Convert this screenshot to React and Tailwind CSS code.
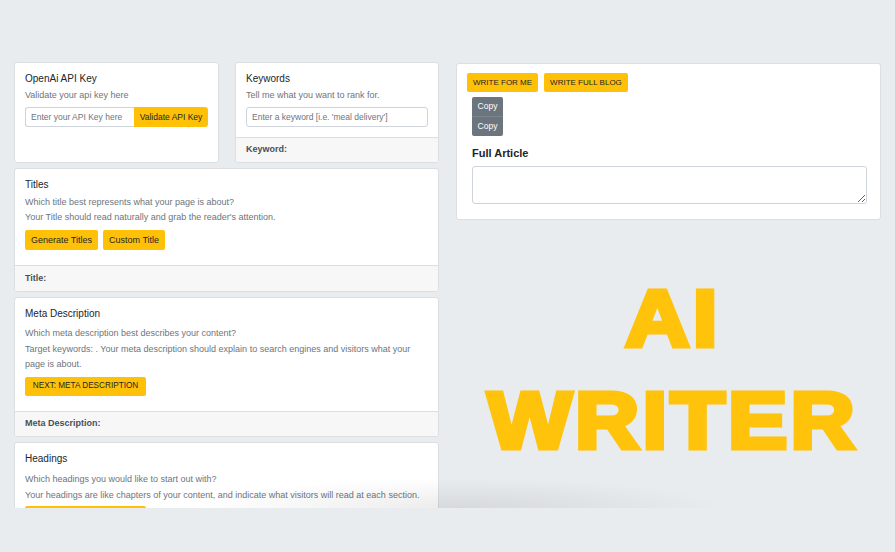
import React from "react";

function Card({ className = "", children }) {
  return (
    <div className={"shrink-0 bg-white border border-[#dcdfe2] rounded-[3px] flex flex-col " + className}>
      {children}
    </div>
  );
}

function Footer({ children, h = "h-[26px]" }) {
  return (
    <div className={"shrink-0 mt-auto border-t border-[#dcdfe2] bg-[#f7f7f7] px-[10px] flex items-center text-[9px] font-bold text-[#495057] rounded-b-[3px] " + h}>
      {children}
    </div>
  );
}

function YBtn({ children, className = "h-[20px] text-[9px] px-[6px]" }) {
  return (
    <button className={"bg-[#ffc107] text-[#212529] rounded-[2px] leading-none whitespace-nowrap " + className}>
      {children}
    </button>
  );
}

export default function App() {
  return (
    <div className="relative w-[895px] h-[552px] overflow-hidden bg-[#e9ecef] font-['Liberation_Sans',Arial,sans-serif]">
      <div className="h-[508px] overflow-hidden pt-[62px] px-[14px] flex gap-[17px]">
        {/* Left column */}
        <div className="w-[425px] shrink-0 flex flex-col gap-[5px]">
          <div className="shrink-0 grid grid-cols-[205px_204px] gap-[16px] h-[101px]">
            <Card>
              <div className="pt-[9px] px-[10px]">
                <div className="text-[10px] leading-[13px] text-[#212529]">OpenAi API Key</div>
                <div className="mt-[3px] text-[9px] leading-[15px] text-[#6c757d]">Validate your api key here</div>
                <div className="mt-[4px] flex h-[20px]">
                  <input
                    className="w-[109px] h-[20px] border border-[#ced4da] border-r-0 rounded-l-[3px] px-[5px] text-[8.5px] text-[#495057] placeholder:text-[#6c757d] outline-none"
                    placeholder="Enter your API Key here"
                  />
                  <button className="w-[76px] h-[20px] bg-[#ffc107] text-[#212529] text-[8.5px] rounded-r-[3px] leading-none whitespace-nowrap">
                    Validate API Key
                  </button>
                </div>
              </div>
            </Card>
            <Card>
              <div className="pt-[9px] px-[10px] pb-[10px]">
                <div className="text-[10px] leading-[13px] text-[#212529]">Keywords</div>
                <div className="mt-[3px] text-[9px] leading-[15px] text-[#6c757d]">Tell me what you want to rank for.</div>
                <input
                  className="mt-[4px] w-full h-[20px] border border-[#ced4da] rounded-[3px] px-[5px] text-[8.5px] text-[#495057] placeholder:text-[#6c757d] outline-none"
                  placeholder="Enter a keyword [i.e. 'meal delivery']"
                />
              </div>
              <Footer h="h-[25px]">Keyword:</Footer>
            </Card>
          </div>

          <Card className="h-[124px]">
            <div className="pt-[9px] px-[10px]">
              <div className="text-[10px] leading-[13px] text-[#212529]">Titles</div>
              <div className="mt-[4px] text-[9px] leading-[15px] text-[#6c757d]">
                <div>Which title best represents what your page is about?</div>
                <div>Your Title should read naturally and grab the reader's attention.</div>
              </div>
              <div className="mt-[5px] flex gap-[5px]">
                <YBtn>Generate Titles</YBtn>
                <YBtn>Custom Title</YBtn>
              </div>
            </div>
            <Footer>Title:</Footer>
          </Card>

          <Card className="h-[140px]">
            <div className="pt-[9px] px-[10px]">
              <div className="text-[10px] leading-[13px] text-[#212529]">Meta Description</div>
              <div className="mt-[6px] text-[9px] leading-[15.5px] text-[#6c757d]">
                <div>Which meta description best describes your content?</div>
                <div>
                  Target keywords: . Your meta description should explain to search engines and visitors what your page is about.
                </div>
              </div>
              <div className="mt-[4px] flex">
                <YBtn className="w-[121px] h-[19px] text-[8.2px] px-0">NEXT: META DESCRIPTION</YBtn>
              </div>
            </div>
            <Footer h="h-[25px]">Meta Description:</Footer>
          </Card>

          <Card className="h-[140px]">
            <div className="pt-[9px] px-[10px]">
              <div className="text-[10px] leading-[13px] text-[#212529]">Headings</div>
              <div className="mt-[6px] text-[9px] leading-[16px] text-[#6c757d]">
                <div>Which headings you would like to start out with?</div>
                <div>Your headings are like chapters of your content, and indicate what visitors will read at each section.</div>
              </div>
              <div className="mt-[3px] flex">
                <button aria-label="Next: headings" className="w-[121px] h-[19px] bg-[#ffc107] rounded-[2px]"></button>
              </div>
            </div>
          </Card>
        </div>

        {/* Right column */}
        <div className="w-[425px] shrink-0 flex flex-col">
          <Card className="mt-[1px] h-[157px]">
            <div className="pt-[9px] px-[10px] flex gap-[6px]">
              <YBtn className="px-[6px] h-[19px] text-[8px]">WRITE FOR ME</YBtn>
              <YBtn className="px-[6px] h-[19px] text-[8px]">WRITE FULL BLOG</YBtn>
            </div>
            <div className="px-[15px] pt-[5px]">
              <div className="flex flex-col items-start">
                <button className="w-[31px] h-[19px] bg-[#6c757d] text-white text-[8.5px] rounded-t-[2px] leading-none">Copy</button>
                <button className="w-[31px] h-[20px] bg-[#6c757d] text-white text-[8.5px] rounded-b-[2px] leading-none border-t border-[#7d858c]">Copy</button>
              </div>
              <div className="mt-[11px] text-[11px] leading-[13px] font-bold text-[#212529]">Full Article</div>
              <textarea className="mt-[6px] block w-[395px] h-[38px] border border-[#ced4da] rounded-[3px] outline-none"></textarea>
            </div>
          </Card>

          <div className="mt-[48px] pl-[8px] text-center text-[#ffc30b] font-bold text-[80px] leading-[102px] tracking-[3px] [-webkit-text-stroke:5px_#ffc30b] scale-x-[1.11]">
            <div>AI</div>
            <div>WRITER</div>
          </div>
        </div>
      </div>

      {/* soft curl shadow at the bottom edge */}
      <div className="absolute left-[190px] top-[478px] w-[540px] h-[30px] bg-[radial-gradient(ellipse_at_bottom,rgba(0,0,0,0.08),rgba(0,0,0,0)_70%)] pointer-events-none"></div>
    </div>
  );
}
